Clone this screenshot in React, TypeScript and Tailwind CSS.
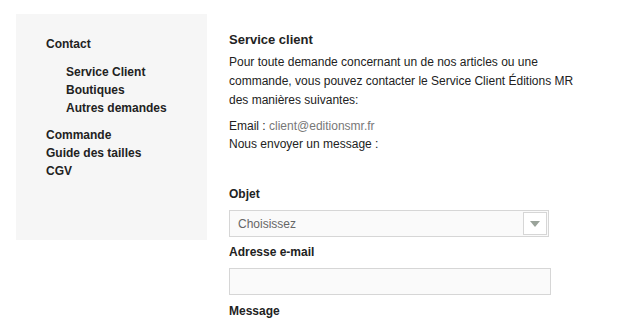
import React from "react";

export default function App() {
  return (
    <div className="w-[622px] h-[328px] bg-white overflow-hidden text-[#222]" style={{ fontFamily: '"Liberation Sans", Arial, sans-serif' }}>
      <div className="flex pt-[14px] pl-[16px]">
        <aside className="w-[191px] h-[226px] bg-[#f6f6f6] pt-[21px] pl-[30px] text-[12px] font-bold leading-[18px]">
          <div>Contact</div>
          <div className="pl-[20px] pt-[10px] pb-[9px]">
            <div>Service Client</div>
            <div>Boutiques</div>
            <div>Autres demandes</div>
          </div>
          <div>Commande</div>
          <div>Guide des tailles</div>
          <div>CGV</div>
        </aside>
        <main className="ml-[22px] pt-[17px] w-[370px]">
          <h1 className="text-[13px] font-bold leading-[18px]">Service client</h1>
          <p className="mt-[4px] text-[12px] leading-[19px] w-[355px]">
            Pour toute demande concernant un de nos articles ou une commande, vous pouvez contacter le Service Client Éditions MR des manières suivantes:
          </p>
          <p className="mt-[7px] text-[12px] leading-[18px]">
            Email : <span className="text-[#777]">client@editionsmr.fr</span>
            <br />
            Nous envoyer un message :
          </p>
          <div className="mt-[32px] text-[12px] font-bold leading-[18px]">Objet</div>
          <div className="mt-[7px] w-[320px] h-[27px] border border-[#d6d6d6] bg-[#fafafa] flex items-center justify-between pl-[8px] pr-[1px]">
            <span className="text-[12px] text-[#666]">Choisissez</span>
            <div className="w-[24px] h-[23px] border border-[#d6d6d6] bg-white flex items-center justify-center">
              <svg width="10" height="6" viewBox="0 0 10 6"><path d="M0 0 L10 0 L5 6 Z" fill="#9aa39a" /></svg>
            </div>
          </div>
          <div className="mt-[6px] text-[12px] font-bold leading-[18px]">Adresse e-mail</div>
          <div className="mt-[7px] w-[322px] h-[27px] border border-[#d6d6d6] bg-[#fafafa]" />
          <div className="mt-[7px] text-[12px] font-bold leading-[18px]">Message</div>
          <div className="mt-[8px] w-[322px] h-[40px] border border-[#d6d6d6] bg-[#fafafa]" />
        </main>
      </div>
    </div>
  );
}
